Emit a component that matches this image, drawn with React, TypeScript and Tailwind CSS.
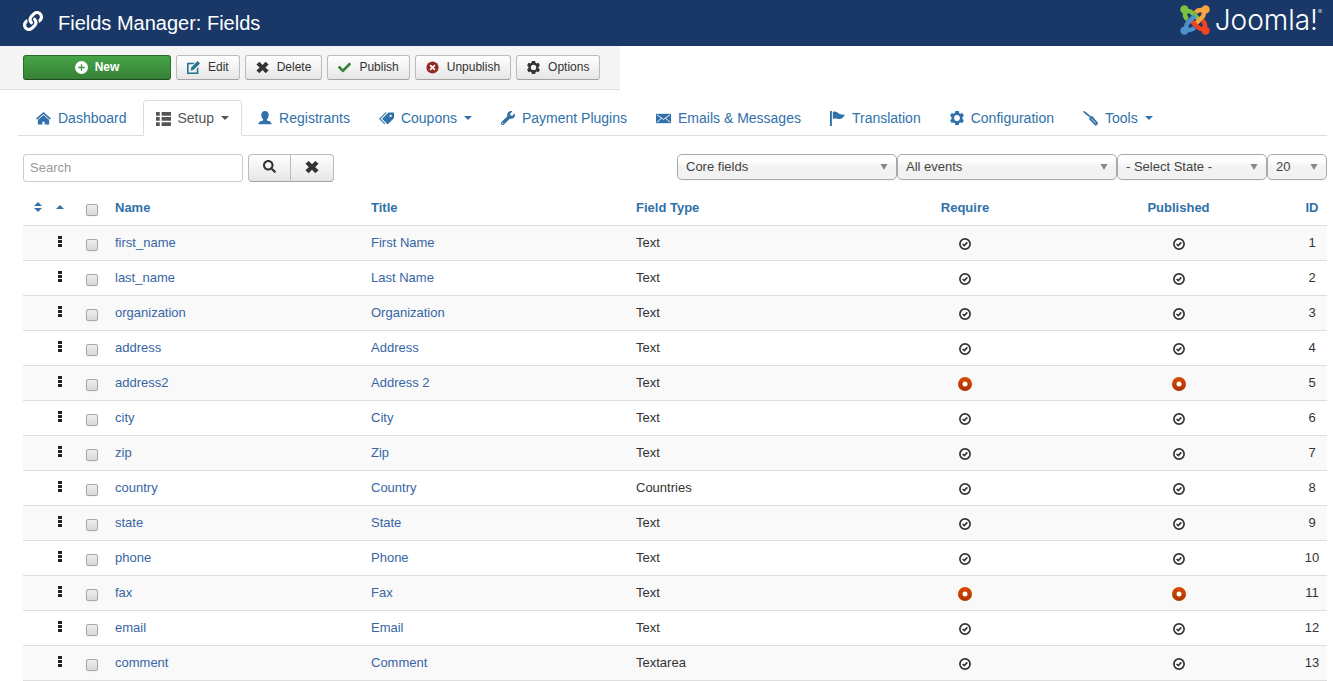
import type { ReactNode } from "react";
import { FaCheck, FaLink, FaSearch, FaWrench } from "react-icons/fa";
import { ImPriceTags } from "react-icons/im";

type IconProps = { className?: string };

function Svg({ className = "size-[14px]", children }: { className?: string; children: ReactNode }) {
  return (
    <svg viewBox="0 0 16 16" fill="currentColor" aria-hidden="true" className={`shrink-0 ${className}`}>
      {children}
    </svg>
  );
}

function HomeIcon() {
  return (
    <Svg className="size-[15px]">
      <path d="M8 1 0 8l1.200 1.200L8 3.300l6.800 5.900L16 8z" />
      <path d="M8 4.300 2 9.500V14.500h4.800v-3h2.400v3H14V9.500z" />
    </Svg>
  );
}

function ListIcon() {
  return (
    <Svg className="size-[15px]">
      <path d="M0 1h4v4H0zM6 1h10v4H6zM0 6.500h4v4H0zM6 6.500h10v4H6zM0 12h4v4H0zM6 12h10v4H6z" />
    </Svg>
  );
}

function UserIcon() {
  return (
    <Svg>
      <path d="M8 0c2.700 0 4.200 1.800 4.200 4.500 0 2-.8 3.800-2 4.800v1.500c2.800.4 5.300 1.500 5.300 4.200H.5c0-2.700 2.500-3.800 5.300-4.200V9.300c-1.200-1-2-2.800-2-4.800C3.800 1.800 5.300 0 8 0z" />
    </Svg>
  );
}

function MailIcon() {
  return (
    <Svg className="size-[15px]">
      <path d="M0 3h16v10H0z" />
      <path d="m1 4 7 5 7-5M1 12l5-4.500M15 12l-5-4.500" fill="none" stroke="#fff" strokeWidth="1" />
    </Svg>
  );
}

function FlagIcon() {
  return (
    <Svg className="size-[15px]">
      <path d="M0 0h2v16H0zM3 1c3-1 4 0 6 1.500C11 4 13 4 16 4c-2 3-3 4-5.500 4.500C8 9 6 7 3 8.500z" />
    </Svg>
  );
}

function GearIcon({ className }: IconProps) {
  return (
    <Svg className={className}>
      <path
        fillRule="evenodd"
        d="M6 0h4l.5 2.200 1.300.8 2.300-.7 1.800 3.200L14.200 7v2l1.700 1.500-1.800 3.200-2.300-.7-1.300.8L10 16H6l-.5-2.200-1.300-.8-2.300.7-1.800-3.200L1.800 9V7L.1 5.500l1.800-3.200 2.300.7 1.300-.8zM8 4.700a3.300 3.300 0 1 0 0 6.600 3.300 3.300 0 0 0 0-6.600z"
      />
    </Svg>
  );
}

function ScrewdriverIcon() {
  return (
    <Svg className="size-[15px]">
      <path d="m0 .8 1-.8 2 1 5.800 5-1.300 1.300L1.600 2.500z" />
      <path d="M9.500 5 6.300 8.200l.9 1.500 5.500 5.600c1.300 1.200 4.200-1.700 3-3L10.700 6.500z" />
      <path d="m9 8.300 4.800 5" stroke="#fff" strokeWidth=".8" />
    </Svg>
  );
}

function EditIcon() {
  return (
    <Svg className="size-[13px] text-[#24748c]">
      <path d="M0 2h9.500L7.800 4H2v10h10V9.500l2-2V16H0z" />
      <path d="m13 0 3 3-7.500 7.500L4.500 12l1-4.300z" />
    </Svg>
  );
}

function CrossIcon({ className }: IconProps) {
  return (
    <Svg className={className}>
      <path d="M4.200 1 8 4.800 11.800 1 15.500 4.300 11.600 8l3.900 3.700L11.800 15 8 11.200 4.200 15 .5 11.700 4.400 8 .5 4.300z" />
    </Svg>
  );
}

function PlusCircleIcon() {
  return (
    <Svg className="size-[13px]">
      <circle cx="8" cy="8" r="8" />
      <path d="M8 4v8M4 8h8" stroke="#409740" strokeWidth="1.600" />
    </Svg>
  );
}

function UnpublishIcon() {
  return (
    <Svg className="size-[13px] text-[#942a25]">
      <circle cx="8" cy="8" r="7.500" />
      <path d="m5 5 6 6M11 5l-6 6" stroke="#fff" strokeWidth="2" />
    </Svg>
  );
}

function Caret({ className }: IconProps) {
  return (
    <svg viewBox="0 0 8 4" aria-hidden="true" className={`h-1 w-2 shrink-0 ${className ?? ""}`}>
      <path d="M0 0h8L4 4z" fill="currentColor" />
    </svg>
  );
}

function JoomlaMark() {
  const hook = "M8 15.500C4 12 4.500 6.500 9 6.500c2 0 3.500 1.200 5 2.700l6.500 6.500";
  const arms = [
    { color: "#7ac143", turn: 0 },
    { color: "#f9a541", turn: 90 },
    { color: "#f44321", turn: 180 },
    { color: "#5091cd", turn: 270 },
  ];
  return (
    <svg viewBox="0 0 32 32" aria-hidden="true" className="size-[30px]">
      {arms.map((arm) => (
        <g key={arm.color} transform={`rotate(${arm.turn} 16 16)`}>
          <circle cx="4.700" cy="4.700" r="4.400" fill={arm.color} />
          <path d={hook} fill="none" stroke={arm.color} strokeWidth="4.800" />
        </g>
      ))}
    </svg>
  );
}

const toolbar = [
  { label: "Edit", icon: <EditIcon /> },
  { label: "Delete", icon: <CrossIcon className="size-[13px]" /> },
  { label: "Publish", icon: <FaCheck className="size-[13px] text-[#378137]" /> },
  { label: "Unpublish", icon: <UnpublishIcon /> },
  { label: "Options", icon: <GearIcon className="size-[13px]" /> },
];

const tabs = [
  { label: "Dashboard", icon: <HomeIcon /> },
  { label: "Setup", icon: <ListIcon />, caret: true, active: true },
  { label: "Registrants", icon: <UserIcon /> },
  { label: "Coupons", icon: <ImPriceTags className="size-[15px]" />, caret: true },
  { label: "Payment Plugins", icon: <FaWrench className="size-[14px]" /> },
  { label: "Emails & Messages", icon: <MailIcon /> },
  { label: "Translation", icon: <FlagIcon /> },
  { label: "Configuration", icon: <GearIcon /> },
  { label: "Tools", icon: <ScrewdriverIcon />, caret: true },
];

const filters = [
  { label: "Field group", value: "Core fields", width: "w-[220px]" },
  { label: "Event", value: "All events", width: "w-[220px]" },
  { label: "State", value: "- Select State -", width: "w-[150px]" },
  { label: "Rows per page", value: "20", width: "w-[60px]" },
];

const fields = [
  { name: "first_name", title: "First Name", type: "Text", on: true },
  { name: "last_name", title: "Last Name", type: "Text", on: true },
  { name: "organization", title: "Organization", type: "Text", on: true },
  { name: "address", title: "Address", type: "Text", on: true },
  { name: "address2", title: "Address 2", type: "Text", on: false },
  { name: "city", title: "City", type: "Text", on: true },
  { name: "zip", title: "Zip", type: "Text", on: true },
  { name: "country", title: "Country", type: "Countries", on: true },
  { name: "state", title: "State", type: "Text", on: true },
  { name: "phone", title: "Phone", type: "Text", on: true },
  { name: "fax", title: "Fax", type: "Text", on: false },
  { name: "email", title: "Email", type: "Text", on: true },
  { name: "comment", title: "Comment", type: "Textarea", on: true },
];

function StatusButton({ on, label }: { on: boolean; label: string }) {
  return (
    <button type="button" aria-label={label} className="mt-px inline-flex size-[14px] items-center justify-center align-middle">
      {on ? (
        <svg viewBox="0 0 12 12" className="size-3" aria-hidden="true">
          <circle cx="6" cy="6" r="5.100" fill="#fff" stroke="#333" strokeWidth="1.700" />
          <path d="m3.600 6 1.700 1.600 3-3.200" fill="none" stroke="#333" strokeWidth="1.700" />
        </svg>
      ) : (
        <svg viewBox="0 0 14 14" className="size-[14px]" aria-hidden="true">
          <defs>
            <linearGradient id="off" x1="0" y1="0" x2="0" y2="1">
              <stop offset="0" stopColor="#d94a08" />
              <stop offset="1" stopColor="#ab3400" />
            </linearGradient>
          </defs>
          <circle cx="7" cy="7" r="7" fill="url(#off)" />
          <circle cx="7" cy="7" r="2.500" fill="#fff" />
        </svg>
      )}
    </button>
  );
}

function CheckBox({ label }: { label: string }) {
  return (
    <input
      type="checkbox"
      aria-label={label}
      className="mt-1 block size-3 appearance-none rounded-[2px] border border-[#a8a8a8] bg-linear-to-b from-[#eee] to-[#d8d8d8] shadow-xs"
    />
  );
}

const buttonLook = "border border-[#bbb] border-b-[#a2a2a2] bg-linear-to-b from-white to-[#e6e6e6] text-[#333]";

export default function App() {
  return (
    <div className="bg-white font-['Liberation_Sans',Arial,sans-serif] text-[13px] leading-[18px] text-[#333]">
      <header className="flex h-[46px] items-center bg-[#1a3867] pr-[11px] pl-[23px] text-white">
        <FaLink className="mb-1 size-5" />
        <h1 className="ml-[15px] text-xl leading-9">Fields Manager: Fields</h1>
        <a href="#" aria-label="Joomla!" className="mb-[7px] ml-auto flex items-center gap-[5px]">
          <JoomlaMark />
          <span className="flex font-[Inter,sans-serif] text-[28px] leading-8 font-light">
            Joomla!
            <span className="text-[6px] leading-4">®</span>
          </span>
        </a>
      </header>

      <div className="flex w-fit gap-[5px] border-b border-[#ddd] bg-[#f5f5f5] py-[9px] pr-5 pl-[23px] text-xs leading-[23px]">
        <button
          type="button"
          className="flex w-[148px] items-center justify-center gap-[7px] rounded-[3px] border border-[#2d6a2d] border-b-[#1f4a1f] bg-linear-to-b from-[#46a546] to-[#378137] font-bold text-white"
        >
          <PlusCircleIcon />
          New
        </button>
        {toolbar.map((item) => (
          <button key={item.label} type="button" className={`flex items-center gap-2 rounded-[3px] px-[10px] ${buttonLook}`}>
            {item.icon}
            {item.label}
          </button>
        ))}
      </div>

      <nav className="mt-[10px] mr-[6px] ml-[18px] flex gap-[3px] border-b border-[#ddd] pl-[5px] text-sm leading-[18px]">
        {tabs.map((tab) => (
          <a
            key={tab.label}
            href="#"
            className={`-mb-px flex items-center gap-[7px] rounded-t border px-3 py-2 ${
              tab.active ? "border-[#ddd] border-b-white bg-white text-[#555]" : "border-transparent text-[#3071a9]"
            }`}
          >
            {tab.icon}
            {tab.label}
            {tab.caret && <Caret />}
          </a>
        ))}
      </nav>

      <main className="mt-[18px] mr-[6px] ml-[23px]">
        <div className="flex items-start justify-between">
          <form className="flex gap-[5px]">
            <input
              type="text"
              aria-label="Search"
              placeholder="Search"
              className="h-7 w-[220px] rounded-[3px] border border-[#ccc] px-[6px] pb-[2px] placeholder:text-[#999]"
            />
            <div className="flex">
              <button type="button" aria-label="Search" className={`flex h-7 w-[43px] items-center justify-center rounded-l ${buttonLook}`}>
                <FaSearch className="mb-[3px] size-[13px]" />
              </button>
              <button type="button" aria-label="Clear" className={`-ml-px flex h-7 w-11 items-center justify-center rounded-r ${buttonLook}`}>
                <CrossIcon className="mb-[3px] size-[14px]" />
              </button>
            </div>
          </form>
          <div className="flex">
            {filters.map((filter) => (
              <div key={filter.label} className={`relative ${filter.width}`}>
                <select
                  aria-label={filter.label}
                  className="h-[26px] w-full appearance-none rounded-[5px] border border-[#aaa] bg-linear-to-b from-white from-20% via-[#f3f3f3] via-50% to-[#f1f1f1] pl-2 text-[#444] shadow-xs"
                >
                  <option>{filter.value}</option>
                </select>
                <svg viewBox="0 0 8 6" aria-hidden="true" className="pointer-events-none absolute top-[10px] right-[9px] h-[6px] w-2">
                  <path d="M.5 0h7L4 6z" fill="#888" />
                </svg>
              </div>
            ))}
          </div>
        </div>

        <table className="mt-2 w-full table-fixed border-collapse border-b border-[#ddd]">
          <thead>
            <tr className="h-[35px] text-[#3071a9]">
              <th className="w-[30px]">
                <button type="button" aria-label="Ordering" className="mx-auto flex flex-col gap-[2px]">
                  <Caret className="rotate-180" />
                  <Caret />
                </button>
              </th>
              <th className="w-[14px]">
                <Caret className="mx-auto rotate-180" />
              </th>
              <th className="w-10 pt-[2px] pl-[19px]">
                <CheckBox label="Check all" />
              </th>
              <th className="w-[256px] px-2 pt-[2px] text-left"><a href="#">Name</a></th>
              <th className="w-[265px] px-2 pt-[2px] text-left"><a href="#">Title</a></th>
              <th className="px-2 pt-[2px] text-left"><a href="#">Field Type</a></th>
              <th className="w-[190px] pt-[2px]"><a href="#">Require</a></th>
              <th className="w-[237px] pt-[2px]"><a href="#">Published</a></th>
              <th className="w-[30px] pt-[2px]"><a href="#">ID</a></th>
            </tr>
          </thead>
          <tbody>
            {fields.map((field, index) => (
              <tr key={field.name} className="h-[35px] border-t border-[#ddd] odd:bg-[#f9f9f9]">
                <td />
                <td>
                  <svg viewBox="0 0 4 12" aria-hidden="true" className="mx-auto mb-[2px] h-3 w-1 text-[#222]">
                    <path d="M0 0h4v3H0zM0 4h4v3H0zM0 8h4v3H0z" fill="currentColor" />
                  </svg>
                </td>
                <td className="pl-[19px]">
                  <CheckBox label={`Select ${field.name}`} />
                </td>
                <td className="px-2"><a href="#" className="text-[#3865a3]">{field.name}</a></td>
                <td className="px-2"><a href="#" className="text-[#3865a3]">{field.title}</a></td>
                <td className="px-2">{field.type}</td>
                <td className="text-center"><StatusButton on={field.on} label="Toggle require" /></td>
                <td className="text-center"><StatusButton on={field.on} label="Toggle published" /></td>
                <td className="text-center">{index + 1}</td>
              </tr>
            ))}
          </tbody>
        </table>
      </main>
    </div>
  );
}
